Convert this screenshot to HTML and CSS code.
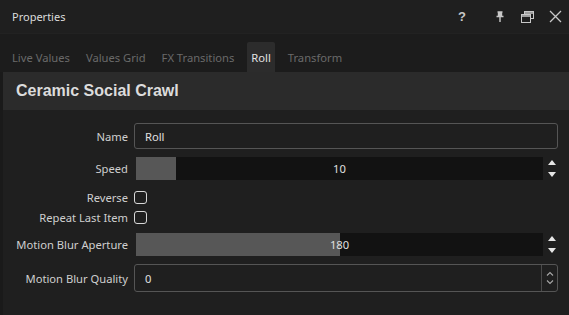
FILE: index.html
```html
<!DOCTYPE html>
<html>
<head>
<meta charset="utf-8">
<link rel="stylesheet" href="styles.css">
</head>
<body>
<div class="window">
  <div class="titlebar">
    <span class="title">Properties</span>
    <div class="tools">
      <span class="tool help">?</span>
      <svg class="tool" width="10" height="12" viewBox="0 0 10 12"><path d="M2.5 1h5M3.5 1v4M6.5 1v4M1.5 5.5h7M5 5.5v5.5" stroke="#c8c8c8" stroke-width="1.4" fill="none"/><rect x="3.5" y="1" width="3" height="4.5" fill="#c8c8c8"/></svg>
      <svg class="tool" width="13" height="12" viewBox="0 0 13 12"><rect x="3.5" y="0.5" width="9" height="7" fill="none" stroke="#c8c8c8"/><rect x="0.5" y="3.5" width="9" height="8" fill="#1f1f1f" stroke="#c8c8c8"/><path d="M1 5h8" stroke="#c8c8c8" stroke-width="1.5"/><path d="M4 2h8" stroke="#c8c8c8" stroke-width="1.5"/></svg>
      <svg class="tool" width="13" height="13" viewBox="0 0 13 13"><path d="M1 1l11 11M12 1L1 12" stroke="#c8c8c8" stroke-width="1.3"/></svg>
    </div>
  </div>
  <div class="tabs">
    <span class="tab">Live Values</span>
    <span class="tab">Values Grid</span>
    <span class="tab">FX Transitions</span>
    <span class="tab active">Roll</span>
    <span class="tab">Transform</span>
  </div>
  <div class="panel">
    <div class="header">Ceramic Social Crawl</div>
    <div class="form">
      <div class="row r-name">
        <label>Name</label>
        <div class="input text">Roll</div>
      </div>
      <div class="row r-speed">
        <label>Speed</label>
        <div class="slider">
          <div class="track"><div class="fill" style="width:40px"></div><span class="val">10</span></div>
          <div class="arrows"><span class="up"></span><span class="down"></span></div>
        </div>
      </div>
      <div class="row r-check1">
        <label>Reverse</label>
        <span class="check"></span>
      </div>
      <div class="row r-check2">
        <label>Repeat Last Item</label>
        <span class="check"></span>
      </div>
      <div class="row r-aperture">
        <label>Motion Blur Aperture</label>
        <div class="slider">
          <div class="track"><div class="fill" style="width:204px"></div><span class="val">180</span></div>
          <div class="arrows"><span class="up"></span><span class="down"></span></div>
        </div>
      </div>
      <div class="row r-quality">
        <label>Motion Blur Quality</label>
        <div class="input spin">
          <span class="num">0</span>
          <div class="chev">
            <svg width="8" height="5" viewBox="0 0 8 5"><path d="M1 4.5L4 1.5 7 4.5" stroke="#a8a8a8" stroke-width="1.1" fill="none"/></svg>
            <svg width="8" height="5" viewBox="0 0 8 5"><path d="M1 0.5L4 3.5 7 0.5" stroke="#a8a8a8" stroke-width="1.1" fill="none"/></svg>
          </div>
        </div>
      </div>
    </div>
  </div>
</div>
</body>
</html>
```
FILE: styles.css
```css
* { box-sizing: border-box; }
html, body { margin: 0; padding: 0; }
body {
  width: 569px;
  height: 315px;
  background: #1e1e1e;
  font-family: "Noto Sans", "Open Sans", sans-serif;
  font-size: 11.2px;
  color: #d0d0d0;
  overflow: hidden;
}
.window { width: 569px; height: 315px; background: #1a1a1a; display: flex; flex-direction: column; }
.titlebar {
  height: 34px;
  background: #1f1f1f;
  display: flex;
  align-items: center;
  padding-left: 12px;
  padding-right: 7px;
  border-bottom: 1px solid #222;
}
.title { color: #dcdcdc; font-size: 11px; }
.tools { margin-left: auto; display: flex; align-items: center; }
.tool { display: block; }
.help { font-weight: bold; color: #c8c8c8; font-size: 13px; font-family: "Liberation Sans", sans-serif; margin-right: 29px; }
.tools svg:nth-child(2) { margin-right: 16px; }
.tools svg:nth-child(3) { margin-right: 15px; }
.tabs {
  height: 38px;
  background: #1c1c1c;
  display: flex;
  align-items: flex-end;
  padding-left: 4px;
}
.tab {
  height: 30px;
  display: flex;
  align-items: center;
  padding: 0 8px;
  color: #6a6a6a;
}
.tab.active {
  background: #2c2c2c;
  color: #e2e2e2;
  padding: 0 4px;
  margin: 0 5px 0 5px;
  border-radius: 2px 2px 0 0;
}
.panel { flex: 1; margin-left: 3px; background: #1f1f1f; }
.header {
  height: 38px;
  background: #2b2b2b;
  display: flex;
  align-items: center;
  padding-left: 13px;
  font-family: "Liberation Sans", Arial, sans-serif;
  font-weight: bold;
  font-size: 16px;
  color: #dcdcdc;
}
.form { padding: 13px 11px 0 0; display: flex; flex-direction: column; }
.row { display: grid; grid-template-columns: 125px 1fr; column-gap: 6px; align-items: center; }
.row label { text-align: right; color: #cfcfcf; }
.r-name { height: 26px; }
.r-speed { height: 23px; margin-top: 8px; }
.r-check1 { height: 20px; margin-top: 7px; }
.r-check2 { height: 20px; }
.r-aperture { height: 23px; margin-top: 6px; }
.r-quality { height: 28px; margin-top: 8px; }
.input {
  height: 100%;
  border: 1px solid #555;
  border-radius: 3px;
  display: flex;
  align-items: center;
  padding-left: 10px;
  color: #e0e0e0;
}
.slider { height: 100%; display: flex; padding-left: 2px; }
.track { flex: 1; position: relative; background: #121212; display: flex; align-items: center; justify-content: center; }
.fill { position: absolute; left: 0; top: 0; bottom: 0; background: #575757; }
.val { position: relative; color: #e0e0e0; }
.arrows { width: 15px; display: flex; flex-direction: column; align-items: center; justify-content: space-between; padding: 3px 0 3px 2px; }
.up { width: 0; height: 0; border-left: 4px solid transparent; border-right: 4px solid transparent; border-bottom: 5px solid #e6e6e6; }
.down { width: 0; height: 0; border-left: 4px solid transparent; border-right: 4px solid transparent; border-top: 5px solid #e6e6e6; }
.check { width: 13px; height: 13px; border: 1.5px solid #d8d8d8; border-radius: 3px; }
.spin { padding-right: 0; }
.num { flex: 1; }
.chev { width: 16px; height: 100%; border-left: 1px solid #4a4a4a; display: flex; flex-direction: column; align-items: center; justify-content: space-around; padding: 4px 0; }
.chev svg { display: block; }
```
